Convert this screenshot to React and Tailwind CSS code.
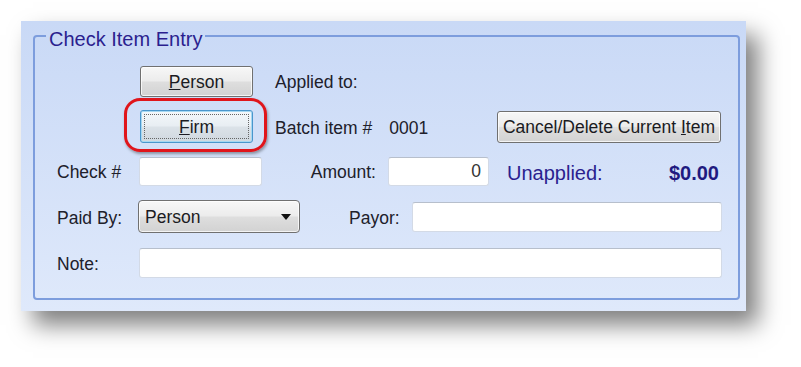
import React from "react"

const face =
  "rounded-[3px] border border-[#707070] bg-[linear-gradient(to_bottom,#f7f7f7_0%,#ececec_48%,#dedede_52%,#d2d2d2_100%)] shadow-[inset_0_0_0_1px_rgba(255,255,255,0.75)] text-[#1b1b22]"
const btn = `${face} flex items-center justify-center pt-[3px]`

const field = "h-[29px] rounded-[3px] border border-[#d3dae6] border-t-[#b7bfcc] bg-white"

export default function App() {
  return (
    <div className="min-h-[367px] w-[801px] bg-white pl-[21px] pt-[21px] font-['Liberation_Sans',Arial,sans-serif] text-[17.5px] leading-none text-[#20202a]">
      <div className="w-[725px] bg-linear-to-b from-[#c9d9f6] to-[#dfe9fb] pb-[11px] pl-[12px] pr-[6px] pt-[1px] shadow-[12px_14px_22px_rgba(0,0,0,0.5)]">
        <fieldset className="rounded-[4px] border-2 border-[#7d9ddd] px-0">
          <legend className="ml-[11px] px-[3px] pt-[7px] text-[20px] leading-[20px] text-[#2b1f8f]">
            Check Item Entry
          </legend>

          <div className="pb-[20px] pl-[22px] pr-[16px] pt-[16px]">
            {/* person / applied to */}
            <div className="flex h-[32px] items-center">
              <div className="w-[83px]" />
              <button className={`${btn} h-[31px] w-[113px]`}>
                <span>
                  <u>P</u>erson
                </span>
              </button>
              <span className="ml-[22px] pt-[4px]">Applied to:</span>
            </div>

            {/* firm / batch */}
            <div className="mt-[13px] flex h-[33px] items-center">
              <div className="w-[83px]" />
              <div className="relative">
                <button className="flex h-[33px] w-[113px] items-center justify-center rounded-[3px] border border-[#4a96cc] bg-[linear-gradient(to_bottom,#f4f8fb_0%,#e8eef3_48%,#dbe2e8_52%,#d0d8df_100%)] p-[3px] text-[#1b1b22] shadow-[inset_0_0_0_1px_#a6d8f2]">
                  <span className="flex h-full w-full items-center justify-center border border-dotted border-[#666] pt-[3px]">
                    <span>
                      <u>F</u>irm
                    </span>
                  </span>
                </button>
                <div className="pointer-events-none absolute -bottom-[9px] -left-[16px] -right-[14px] -top-[12px] rounded-[16px] border-[3px] border-[#e0151b] shadow-[1px_2px_3px_rgba(0,0,0,0.35)]" />
              </div>
              <span className="ml-[22px] pt-[4px]">Batch item #</span>
              <span className="ml-[17px] pt-[4px]">0001</span>
              <button className={`${btn} ml-auto mr-[1px] h-[32px] w-[224px]`}>
                <span>
                  Cancel/Delete Current <u>I</u>tem
                </span>
              </button>
            </div>

            {/* check / amount / unapplied */}
            <div className="mt-[13px] flex h-[30px] items-center">
              <span className="w-[82px] pt-[4px]">Check #</span>
              <div className={`${field} w-[123px]`} />
              <span className="w-[126px] pr-[12px] pt-[4px] text-right">Amount:</span>
              <div className={`${field} flex w-[101px] items-center justify-end pr-[7px] pt-[2px] text-[#333]`}>0</div>
              <span className="ml-[18px] pt-[4px] text-[20px] text-[#2b1f8f]">Unapplied:</span>
              <span className="ml-auto mr-[3px] pt-[4px] text-[20px] font-bold text-[#1f1a80]">$0.00</span>
            </div>

            {/* paid by / payor */}
            <div className="mt-[14px] flex h-[33px] items-center">
              <span className="w-[81px] pt-[4px]">Paid By:</span>
              <div className={`${face} flex h-[33px] w-[162px] items-center justify-between rounded-[4px] pl-[6px] pr-[8px]`}>
                <span className="pt-[3px]">Person</span>
                <svg width="10" height="6" viewBox="0 0 10 6">
                  <path d="M0 0h10L5 6z" fill="#111" />
                </svg>
              </div>
              <span className="ml-[49px] w-[63px] pt-[4px]">Payor:</span>
              <div className={`${field} h-[30px] flex-1`} />
            </div>

            {/* note */}
            <div className="mt-[15px] flex h-[30px] items-center">
              <span className="w-[82px] pt-[4px]">Note:</span>
              <div className={`${field} h-[30px] flex-1`} />
            </div>
          </div>
        </fieldset>
      </div>
    </div>
  )
}
